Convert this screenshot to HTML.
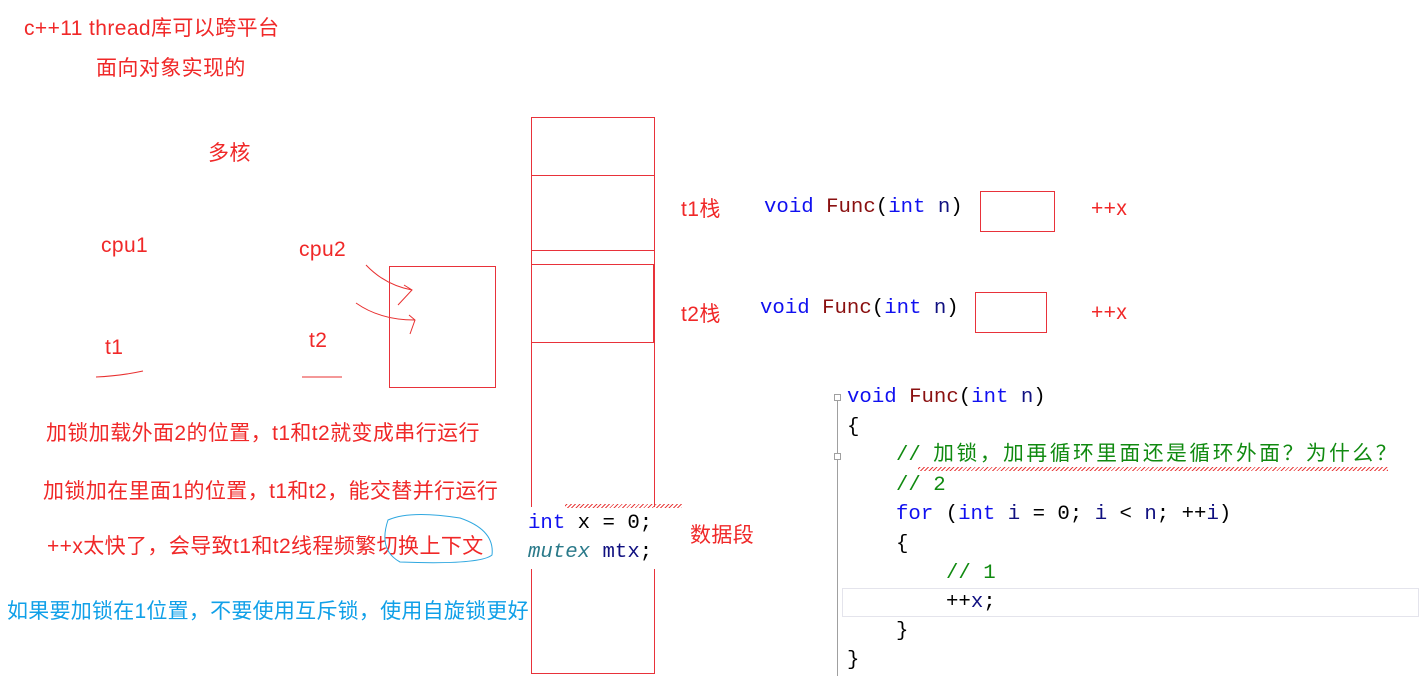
<!DOCTYPE html>
<html><head><meta charset="utf-8"><style>
body{margin:0;width:1419px;height:685px;background:#fff;position:relative;overflow:hidden;font-family:"Liberation Sans","Noto Sans CJK SC",sans-serif}
.t{position:absolute;white-space:nowrap;line-height:1;font-size:21px;letter-spacing:0.4px;color:#f02828}
.b{position:absolute;border:1px solid #e8323a;box-sizing:border-box}
.m{position:absolute;white-space:pre;font-family:"Liberation Mono","Noto Sans CJK SC",monospace;font-size:20.7px;line-height:1}
.kw{color:#1010f0}.fn{color:#8a1010}.cm{color:#108a10}.bk{color:#000}
</style></head><body>
<div class="t" style="left:24px;top:18px">c++11 thread库可以跨平台</div>
<div class="t" style="left:96px;top:58px">面向对象实现的</div>
<div class="t" style="left:208px;top:143px">多核</div>
<div class="t" style="left:101px;top:235px">cpu1</div>
<div class="t" style="left:299px;top:239px">cpu2</div>
<div class="t" style="left:105px;top:337px">t1</div>
<div class="t" style="left:309px;top:330px">t2</div>
<div class="t" style="left:46px;top:423px">加锁加载外面2的位置，t1和t2就变成串行运行</div>
<div class="t" style="left:43px;top:481px">加锁加在里面1的位置，t1和t2，能交替并行运行</div>
<div class="t" style="left:47px;top:536px">++x太快了，会导致t1和t2线程频繁切换上下文</div>
<div class="t" style="left:7px;top:601px;color:#10a0e8;letter-spacing:0.25px">如果要加锁在1位置，不要使用互斥锁，使用自旋锁更好</div>
<div class="t" style="left:681px;top:199px">t1栈</div>
<div class="t" style="left:681px;top:304px">t2栈</div>
<div class="t" style="left:690px;top:525px">数据段</div>
<div class="t" style="left:1091px;top:198px">++x</div>
<div class="t" style="left:1091px;top:302px">++x</div>

<svg style="position:absolute;left:0;top:0" width="1419" height="685">
<g fill="none" stroke="#e83030" stroke-width="1">
<path d="M96 377 Q120 376 143 371"/>
<path d="M302 377 L342 377"/>
<path d="M366 265 Q385 285 412 290 M398 305 L412 290 L404 285"/>
<path d="M356 303 Q380 320 415 320 M410 334 L415 320 L409 315"/>
</g>
<path d="M388 520 Q410 510 460 518 Q495 530 492 555 Q480 565 400 562 Q378 550 388 520Z" fill="none" stroke="#30a8e0" stroke-width="1"/>
</svg>

<div class="b" style="left:531px;top:117px;width:124px;height:557px"></div>
<div class="b" style="left:531px;top:175px;width:124px;height:76px"></div>
<div class="b" style="left:531px;top:264px;width:123px;height:79px"></div>
<div class="b" style="left:389px;top:266px;width:107px;height:122px"></div>
<div class="b" style="left:980px;top:191px;width:75px;height:41px"></div>
<div class="b" style="left:975px;top:292px;width:72px;height:41px"></div>

<div style="position:absolute;left:522px;top:507px;width:160px;height:62px;background:#fff"></div>
<div style="position:absolute;left:565px;top:504px;width:117px;height:4px;background:repeating-linear-gradient(135deg,transparent 0 1px,#e84040 1px 2px,transparent 2px 3px)"></div>
<div class="m" style="left:528px;top:514px"><span class="kw">int</span><span class="bk"> x = 0;</span></div>
<div class="m" style="left:528px;top:543px"><span style="color:#2b7a8a;font-style:italic">mutex</span><span class="bk"> </span><span style="color:#101080">mtx</span><span class="bk">;</span></div>

<div class="m" style="left:764px;top:198px"><span class="kw">void</span> <span class="fn">Func</span><span class="bk">(</span><span class="kw">int</span> <span style="color:#101080">n</span><span class="bk">)</span></div>
<div class="m" style="left:760px;top:299px"><span class="kw">void</span> <span class="fn">Func</span><span class="bk">(</span><span class="kw">int</span> <span style="color:#101080">n</span><span class="bk">)</span></div>

<div style="position:absolute;left:837px;top:394px;width:1px;height:282px;background:#a0a0a0"></div>
<div style="position:absolute;left:834px;top:394px;width:7px;height:7px;border:1px solid #a0a0a0;background:#fff;box-sizing:border-box"></div>
<div style="position:absolute;left:834px;top:453px;width:7px;height:7px;border:1px solid #a0a0a0;background:#fff;box-sizing:border-box"></div>
<div style="position:absolute;left:842px;top:588px;width:577px;height:29px;border:1px solid #e4e4ec;box-sizing:border-box"></div>
<div style="position:absolute;left:918px;top:467px;width:470px;height:4px;background:repeating-linear-gradient(135deg,transparent 0 1px,#e84040 1px 2px,transparent 2px 3px)"></div>

<div class="m" style="left:847px;top:388px"><span class="kw">void</span> <span class="fn">Func</span><span class="bk">(</span><span class="kw">int</span> <span style="color:#101080">n</span><span class="bk">)</span></div>
<div class="m bk" style="left:847px;top:418px">{</div>
<div class="m cm" style="left:896px;top:446px">// <span style="letter-spacing:2.6px">加锁，加再循环里面还是循环外面？为什么？</span></div>
<div class="m cm" style="left:896px;top:476px">// 2</div>
<div class="m" style="left:896px;top:505px"><span class="kw">for</span><span class="bk"> (</span><span class="kw">int</span> <span style="color:#101080">i</span><span class="bk"> = 0; </span><span style="color:#101080">i</span><span class="bk"> &lt; </span><span style="color:#101080">n</span><span class="bk">; ++</span><span style="color:#101080">i</span><span class="bk">)</span></div>
<div class="m bk" style="left:896px;top:535px">{</div>
<div class="m cm" style="left:946px;top:564px">// 1</div>
<div class="m bk" style="left:946px;top:593px">++<span style="color:#101080">x</span>;</div>
<div class="m bk" style="left:896px;top:622px">}</div>
<div class="m bk" style="left:847px;top:651px">}</div>
</body></html>
